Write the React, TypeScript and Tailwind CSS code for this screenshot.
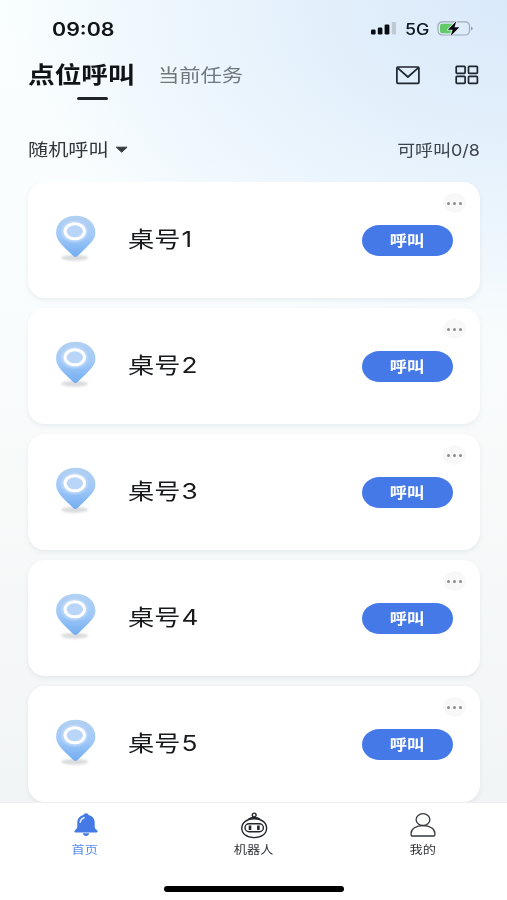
import React from "react";

const tables = ["1", "2", "3", "4", "5"];

/* Single-line label drawn slightly extended in the horizontal direction. */
function Label({ className, children }: { className: string; children: React.ReactNode }) {
  return <span className={`block whitespace-nowrap ${className}`}>{children}</span>;
}

function Signal() {
  return (
    <svg width="26" height="14" viewBox="0 0 26 14">
      <rect x="0" y="8.500" width="4.600" height="5" rx="1.300" fill="#0a0d12" />
      <rect x="6.800" y="6.500" width="4.600" height="7" rx="1.300" fill="#0a0d12" />
      <rect x="13.600" y="3.500" width="4.800" height="10" rx="1.300" fill="#0a0d12" />
      <rect x="20.800" y="1" width="4.200" height="12.500" rx="1.300" fill="#c1cad3" />
    </svg>
  );
}

function Battery() {
  return (
    <svg width="38" height="18" viewBox="0 0 38 18">
      <rect x="1" y="2.800" width="31.500" height="13.200" rx="4.200" fill="none" stroke="#9fabb5" strokeWidth="1.200" />
      <path d="M5.300 4.700H16L12 10.200l3 .3-1.600 3.800H5.300Q3 14.300 3 12V7Q3 4.700 5.300 4.700Z" fill="#62cb68" />
      <path d="M34.100 7.400v4q1.500-.6 1.500-2t-1.500-2Z" fill="#8d99a3" />
      <path d="M19.300 2.200 10.800 10.800H15.600L13.700 17 22.300 8.200H17.500Z" fill="#05080c" stroke="#e0eef5" strokeWidth="1.600" paintOrder="stroke" strokeLinejoin="round" />
    </svg>
  );
}

function Mail() {
  return (
    <svg width="26" height="20" viewBox="0 0 26 20" fill="none" stroke="#1d252d" strokeWidth="1.700" strokeLinejoin="round">
      <rect x="1.900" y="2" width="22" height="16.300" rx="1" />
      <path d="M2.300 2.700 12.900 12 23.500 2.700" />
    </svg>
  );
}

function Grid() {
  return (
    <svg width="24" height="20" viewBox="0 0 24 20" fill="none" stroke="#1d252d" strokeWidth="1.700">
      <rect x="1.200" y="1.300" width="8.900" height="7" rx="0.800" />
      <rect x="13.500" y="1.300" width="8.900" height="7" rx="0.800" />
      <rect x="1.200" y="11.300" width="8.900" height="7" rx="0.800" />
      <rect x="13.500" y="11.300" width="8.900" height="7" rx="0.800" />
    </svg>
  );
}

function Pin() {
  return (
    <svg width="44" height="50" viewBox="0.4 0 44 50">
      <defs>
        <linearGradient id="pinBody" x1="0" y1="0" x2="0" y2="1">
          <stop offset="0" stopColor="#b2d1f2" />
          <stop offset="0.500" stopColor="#a1c9f8" />
          <stop offset="1" stopColor="#72adf0" />
        </linearGradient>
        <radialGradient id="pinGlow">
          <stop offset="0.550" stopColor="#fff" stopOpacity="0.600" />
          <stop offset="1" stopColor="#fff" stopOpacity="0" />
        </radialGradient>
        <filter id="pinShade" x="-20%" y="-50%" width="140%" height="200%">
          <feGaussianBlur stdDeviation="0.900" />
        </filter>
      </defs>
      <ellipse cx="21" cy="44.800" rx="13.500" ry="2.900" fill="#dadbdd" filter="url(#pinShade)" />
      <path d="M22 2.800C10.500 2.800 2.500 10 2.500 19.500c0 6 3.500 10 8 14.700L19.600 43Q21.800 45 24 43l8.800-8.600C38 29.500 41.800 25.500 41.800 19.500 41.800 10 33.500 2.800 22 2.800Z" fill="url(#pinBody)" />
      <ellipse cx="21" cy="18.700" rx="14.500" ry="12" fill="url(#pinGlow)" />
      <ellipse cx="21.200" cy="18.300" rx="9.700" ry="7.500" fill="#b9d5f8" stroke="#fff" strokeWidth="3" />
    </svg>
  );
}

function Bell() {
  return (
    <svg width="26" height="26" viewBox="0 0 26 26">
      <path d="M13 1.300c-1.400 0-2.300.7-2.500 1.700C6.500 4 4.300 7 4.300 10.500v4.300c0 1.300-.6 2-1.500 2.700l-1 .9c-.9.900-.4 2 .8 2h20.800c1.200 0 1.700-1.100.8-2l-1-.9c-.9-.7-1.500-1.400-1.500-2.700v-4.300C21.700 7 19.500 4 15.500 3c-.2-1-1.100-1.700-2.500-1.700Z" fill="#4579e6" />
      <path d="M9.800 21.300h6.400c-.3 1.600-1.500 2.600-3.200 2.600s-2.900-1-3.200-2.600Z" fill="#4579e6" />
      <path d="M7.200 10.200Q7.500 6.900 11 5.700" fill="none" stroke="#d5e4ff" strokeWidth="1.700" strokeLinecap="round" />
    </svg>
  );
}

function Robot() {
  return (
    <svg width="28" height="28" viewBox="0 0 28 28" fill="none" stroke="#22262b" strokeWidth="1.400">
      <circle cx="14.200" cy="3" r="1.900" />
      <path d="M8.500 7.500Q10.500 5.700 14.200 5.700T19.900 7.500" strokeWidth="1.700" />
      <path d="M14.200 6.800C21.500 6.800 26.600 10.600 26.600 16.200S21.500 25.600 14.200 25.600 1.800 21.800 1.800 16.200 6.900 6.800 14.200 6.800Z" />
      <rect x="5" y="11.700" width="18.400" height="8" rx="4" />
      <path d="M10 13.500v4.400M18.400 13.500v4.400" strokeWidth="2.600" />
    </svg>
  );
}

function Person() {
  return (
    <svg width="28" height="26" viewBox="0 0 28 26" fill="none" stroke="#34383c" strokeWidth="1.300" strokeLinejoin="round">
      <ellipse cx="14" cy="7.600" rx="6.900" ry="5.900" />
      <path d="M2.100 22.700v-1.500C2.100 16.700 7.200 13.700 14 13.700s11.900 3 11.900 7.500v1.500q0 1.300-1.400 1.300H3.500q-1.400 0-1.400-1.300Z" />
    </svg>
  );
}

function Card({ number }: { number: string }) {
  return (
    <article className="flex h-[116px] shrink-0 rounded-[17px] bg-white pl-[26px] shadow-[0_2px_5px_rgba(70,90,100,0.09)]">
      <div className="pt-[31px]">
        <Pin />
      </div>
      <div className="ml-[30px] flex-1 pt-[41px]">
        <Label className="origin-left scale-x-[1.19] text-[22px] leading-[32px] text-[#17191b]">
          桌号<span className="ml-px">{number}</span>
        </Label>
      </div>
      <div className="flex w-[118px] flex-col">
        <button aria-label="更多" className="ml-[80.500px] mt-[11px] flex h-[20px] w-[23px] items-center justify-center gap-[3px] rounded-[50%] bg-[#f8f8f8]">
          <i className="h-[3px] w-[3px] rounded-full bg-[#8d8d8d]" />
          <i className="h-[3px] w-[3px] rounded-full bg-[#8d8d8d]" />
          <i className="h-[3px] w-[3px] rounded-full bg-[#8d8d8d]" />
        </button>
        <button className="mt-[12px] flex h-[31px] w-[91px] items-center justify-center rounded-[18px/16px] bg-[#4579e7] text-white">
          <Label className="scale-x-[1.15] text-[15px] font-bold leading-[30px]">呼叫</Label>
        </button>
      </div>
    </article>
  );
}

export default function App() {
  return (
    <div className="flex h-[900px] w-[507px] flex-col overflow-hidden bg-[radial-gradient(ellipse_500px_350px_at_100%_0%,#dae9fa_0%,#e2effb_35%,#ebf5fd_62%,rgba(247,252,254,0)_100%),linear-gradient(180deg,#f9fefe_0%,#fafdfd_30%,#f8fafa_55%,#f0f3f4_100%)] font-['Inter','Noto_Sans_CJK_SC',sans-serif]">
      <header className="flex h-[56px] shrink-0 items-center pl-[52px] pr-[32px]">
        <Label className="mt-[3px] origin-left scale-x-[1.19] text-[18px] font-semibold leading-[24px] text-[#101418]">09:08</Label>
        <div className="ml-auto flex items-center">
          <Signal />
          <Label className="ml-[7.500px] mt-[3px] w-[32.500px] origin-left scale-x-[1.15] text-[15.500px] font-medium leading-[20px] text-[#101820]">5G</Label>
          <Battery />
        </div>
      </header>

      <nav className="flex h-[60px] shrink-0 pl-[28px] pr-[28px]">
        <div className="w-[129.500px]">
          <Label className="origin-left scale-x-[1.16] text-[23px] font-bold leading-[38px] text-[#111417]">点位呼叫</Label>
          <div className="ml-[49px] mt-[3px] h-[2.500px] w-[31px] rounded-full bg-[#20252a]" />
        </div>
        <Label className="mt-[1px] origin-left scale-x-[1.15] text-[18.500px] leading-[37px] text-[#70777d]">当前任务</Label>
        <div className="ml-auto flex gap-[34px] pt-[9px]">
          <Mail />
          <Grid />
        </div>
      </nav>

      <section className="flex h-[66px] shrink-0 items-start justify-between pl-[28px] pr-[27.500px] pt-[21px]">
        <div className="flex items-center">
          <Label className="w-[87px] origin-left scale-x-[1.16] text-[17.400px] leading-[26px] text-[#30363a]">随机呼叫</Label>
          <svg width="14" height="8" viewBox="0 0 14 8"><path d="M1.300 1.200h10.800L6.700 6.200Z" fill="#343a3f" stroke="#343a3f" strokeLinejoin="round" /></svg>
        </div>
        <Label className="origin-right scale-x-[1.12] text-[16px] leading-[26px] text-[#3b444c]">可呼叫0/8</Label>
      </section>

      <main className="flex flex-1 flex-col gap-[10px] overflow-hidden pl-[28px] pr-[27px]">
        {tables.map((number) => <Card key={number} number={number} />)}
      </main>

      <footer className="flex h-[98px] shrink-0 flex-col border-t border-[#edf0f0] bg-white">
        <div className="grid h-[83px] grid-cols-3 text-[#303438]">
          <div className="flex flex-col items-center pl-[2px] pt-[9px] text-[#5b8def]">
            <Bell />
            <Label className="mr-[2px] mt-[3px] scale-x-[1.13] text-[11.700px] leading-[18px]">首页</Label>
          </div>
          <div className="flex flex-col items-center pt-[9px]">
            <Robot />
            <Label className="mt-[1px] scale-x-[1.13] text-[11.700px] leading-[18px]">机器人</Label>
          </div>
          <div className="flex flex-col items-center pt-[9px]">
            <Person />
            <Label className="mt-[3px] scale-x-[1.13] text-[11.700px] leading-[18px]">我的</Label>
          </div>
        </div>
        <div className="ml-[164px] h-[6px] w-[180px] rounded-full bg-black" />
      </footer>
    </div>
  );
}
